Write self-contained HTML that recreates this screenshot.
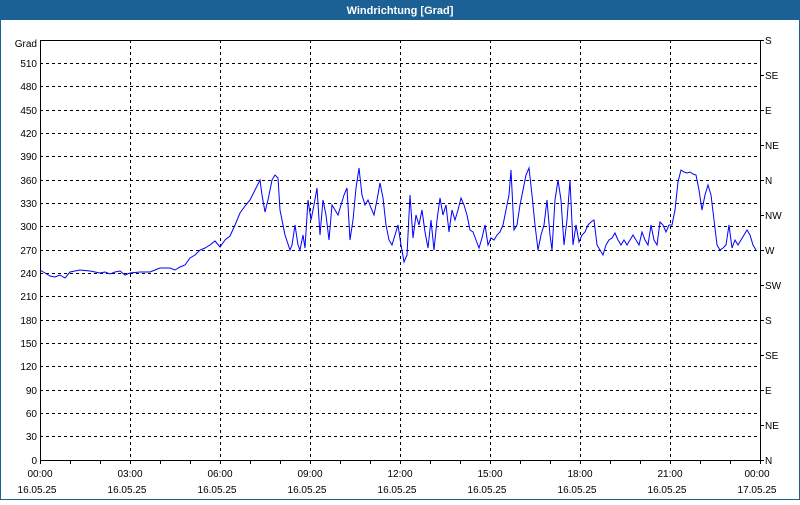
<!DOCTYPE html>
<html><head><meta charset="utf-8"><style>
html,body{margin:0;padding:0;background:#fff}
body{width:800px;height:500px;overflow:hidden;position:relative;font-family:"Liberation Sans",sans-serif}
</style></head><body>
<svg width="800" height="500" xmlns="http://www.w3.org/2000/svg" font-family="Liberation Sans, sans-serif" font-size="10">
<rect x="0" y="0" width="800" height="500" fill="#fff"/>
<rect x="0" y="0" width="800" height="20" fill="#1c6195"/>
<rect x="0.5" y="0.5" width="799" height="499" fill="none" stroke="#1c6195" stroke-width="1"/>
<text x="400" y="14" text-anchor="middle" fill="#fff" font-weight="bold" font-size="11">Windrichtung [Grad]</text>
<g stroke="#000" stroke-width="1" stroke-dasharray="3,3" shape-rendering="crispEdges">
<line x1="40" y1="63.5" x2="760" y2="63.5"/><line x1="40" y1="86.5" x2="760" y2="86.5"/><line x1="40" y1="110.5" x2="760" y2="110.5"/><line x1="40" y1="133.5" x2="760" y2="133.5"/><line x1="40" y1="156.5" x2="760" y2="156.5"/><line x1="40" y1="180.5" x2="760" y2="180.5"/><line x1="40" y1="203.5" x2="760" y2="203.5"/><line x1="40" y1="226.5" x2="760" y2="226.5"/><line x1="40" y1="250.5" x2="760" y2="250.5"/><line x1="40" y1="273.5" x2="760" y2="273.5"/><line x1="40" y1="296.5" x2="760" y2="296.5"/><line x1="40" y1="320.5" x2="760" y2="320.5"/><line x1="40" y1="343.5" x2="760" y2="343.5"/><line x1="40" y1="366.5" x2="760" y2="366.5"/><line x1="40" y1="390.5" x2="760" y2="390.5"/><line x1="40" y1="413.5" x2="760" y2="413.5"/><line x1="40" y1="436.5" x2="760" y2="436.5"/>
<line x1="130.5" y1="40" x2="130.5" y2="460"/><line x1="220.5" y1="40" x2="220.5" y2="460"/><line x1="310.5" y1="40" x2="310.5" y2="460"/><line x1="400.5" y1="40" x2="400.5" y2="460"/><line x1="490.5" y1="40" x2="490.5" y2="460"/><line x1="580.5" y1="40" x2="580.5" y2="460"/><line x1="670.5" y1="40" x2="670.5" y2="460"/>
</g>
<rect x="40.5" y="40.5" width="720" height="420" fill="none" stroke="#000" stroke-width="1" shape-rendering="crispEdges"/>
<g stroke="#000" shape-rendering="crispEdges" id="ticks"></g>
<g text-anchor="end" fill="#000">
<text x="37" y="47">Grad</text><text x="37" y="67">510</text><text x="37" y="90">480</text><text x="37" y="114">450</text><text x="37" y="137">420</text><text x="37" y="160">390</text><text x="37" y="184">360</text><text x="37" y="207">330</text><text x="37" y="230">300</text><text x="37" y="254">270</text><text x="37" y="277">240</text><text x="37" y="300">210</text><text x="37" y="324">180</text><text x="37" y="347">150</text><text x="37" y="370">120</text><text x="37" y="394">90</text><text x="37" y="417">60</text><text x="37" y="440">30</text><text x="37" y="464">0</text>
</g>
<g fill="#000">
<text x="765" y="44">S</text><text x="765" y="79">SE</text><text x="765" y="114">E</text><text x="765" y="149">NE</text><text x="765" y="184">N</text><text x="765" y="219">NW</text><text x="765" y="254">W</text><text x="765" y="289">SW</text><text x="765" y="324">S</text><text x="765" y="359">SE</text><text x="765" y="394">E</text><text x="765" y="429">NE</text><text x="765" y="464">N</text>
</g>
<g text-anchor="middle" fill="#000">
<text x="40" y="477">00:00</text><text x="130" y="477">03:00</text><text x="220" y="477">06:00</text><text x="310" y="477">09:00</text><text x="400" y="477">12:00</text><text x="490" y="477">15:00</text><text x="580" y="477">18:00</text><text x="670" y="477">21:00</text><text x="757" y="477">00:00</text>
<text x="37" y="493">16.05.25</text><text x="127" y="493">16.05.25</text><text x="217" y="493">16.05.25</text><text x="307" y="493">16.05.25</text><text x="397" y="493">16.05.25</text><text x="487" y="493">16.05.25</text><text x="577" y="493">16.05.25</text><text x="667" y="493">16.05.25</text><text x="757" y="493">17.05.25</text>
</g>
<path stroke="#000" fill="none" shape-rendering="crispEdges" d="M70.5 460v4M100.5 460v4M130.5 460v4M160.5 460v4M190.5 460v4M220.5 460v4M250.5 460v4M280.5 460v4M310.5 460v4M340.5 460v4M370.5 460v4M400.5 460v4M430.5 460v4M460.5 460v4M490.5 460v4M520.5 460v4M550.5 460v4M580.5 460v4M610.5 460v4M640.5 460v4M670.5 460v4M700.5 460v4M730.5 460v4M760.5 460v4M40.5 460v4
M760 40.5h4M760 75.5h4M760 110.5h4M760 145.5h4M760 180.5h4M760 215.5h4M760 250.5h4M760 285.5h4M760 320.5h4M760 355.5h4M760 390.5h4M760 425.5h4M760 460.5h4"/>
<polyline fill="none" stroke="#0000ff" stroke-width="1" points="40,270 45,273 50,276 55,277 60,275 65,278 70,272 75,271 80,270 90,271 100,273 105,272 110,274 115,272 120,271 125,275 130,273 140,272 150,272 155,270 160,268 170,268 175,270 180,267 185,265 190,258 195,255 200,250 205,248 210,245 215,241 220,247 225,240 230,236 235,225 240,213 245,206 250,200 255,190 260,180 262,195 265,212 268,200 270,190 272,180 275,175 278,178 280,210 285,235 290,250 292,245 295,225 298,245 300,250 303,235 305,248 308,200 311,220 314,205 317,188 320,235 323,200 326,215 329,240 332,205 335,210 338,215 341,205 344,195 347,188 350,240 353,220 356,188 359,168 362,195 365,205 368,200 371,208 374,215 377,200 380,183 383,198 386,225 389,240 392,245 395,235 398,225 401,245 404,262 407,255 410,195 413,238 416,215 419,225 422,210 425,232 428,248 431,220 434,250 437,220 440,198 443,215 446,205 449,232 452,210 455,220 458,210 461,198 464,205 467,215 470,230 473,232 476,240 479,248 482,238 485,225 488,245 491,238 494,240 497,235 500,232 503,225 506,210 509,195 511,170 514,230 517,225 520,205 523,190 526,175 529,168 532,195 535,225 538,250 541,235 544,225 547,200 550,235 552,250 555,200 558,180 561,200 564,245 567,220 570,180 573,245 576,225 579,242 582,235 585,232 588,225 591,222 594,220 597,245 600,250 603,255 606,245 609,240 612,238 615,233 618,240 621,245 624,240 627,245 630,240 633,235 636,240 639,245 642,232 645,240 648,245 651,225 654,240 657,245 660,222 663,225 666,232 669,225 672,225 675,210 678,182 681,170 684,172 687,173 690,172 693,174 696,175 699,190 702,210 705,195 708,185 711,195 714,220 717,245 720,250 723,248 726,245 729,225 732,248 735,240 738,245 741,240 744,235 747,230 750,235 753,245 756,250"/>
</svg>
</body></html>
